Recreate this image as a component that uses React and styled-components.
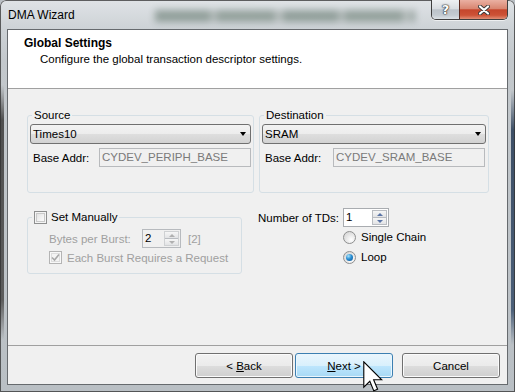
import React from "react";
import styled, { createGlobalStyle, css } from "styled-components";

const GlobalStyle = createGlobalStyle`
  html, body { margin: 0; padding: 0; background: #b9bfc4; }
  body { font-family: "Liberation Sans", Arial, sans-serif; font-size: 11.5px; color: #000; }
  * { box-sizing: border-box; }
`;

const Window = styled.div`
  position: relative;
  width: 515px;
  height: 392px;
  overflow: hidden;
  display: flex;
  flex-direction: column;
  border-radius: 6px 6px 0 0;
  box-shadow: inset 0 0 0 1px rgba(50, 50, 50, 0.75);
  background:
    linear-gradient(to bottom, transparent 85px, #4f4f4f 120px, #5c5c5c 300px, transparent 340px) left top / 4px 100% no-repeat,
    linear-gradient(to bottom, transparent 90px, #3d4f66 130px, #4b5f78 310px, transparent 345px) right top / 4px 100% no-repeat,
    linear-gradient(to bottom, #dfe3e6 0px, #cdd2d6 29px, #c3c8cc 60px, #b9bfc4 100%);
`;

const TitleBar = styled.div`
  height: 29px;
  display: flex;
  align-items: flex-start;
  padding-left: 8px;
  flex-shrink: 0;
`;

const TitleText = styled.div`
  line-height: 30px;
  font-size: 12px;
  color: #000;
`;

const BlurStrip = styled.div`
  align-self: center;
  margin-left: 80px;
  width: 260px;
  height: 12px;
  margin-top: 2px;
  background: repeating-linear-gradient(
    to right,
    #2f4a3a 0 55px,
    #7d8a83 55px 62px,
    #36503f 62px 120px,
    #8c9690 120px 128px
  );
  filter: blur(3.5px);
  opacity: 0.4;
`;

const CaptionGroup = styled.div`
  margin-left: auto;
  margin-right: 7px;
  height: 20px;
  display: flex;
  border: 1px solid #3f3f3f;
  border-top: none;
  border-radius: 0 0 5px 5px;
  overflow: hidden;
  box-shadow: 0 1px 0 rgba(255, 255, 255, 0.6);
`;

const CaptionButton = styled.div`
  display: flex;
  align-items: center;
  justify-content: center;
  font-family: "DejaVu Sans", "Liberation Sans", sans-serif;
  font-weight: bold;
  color: #ffffff;
  text-shadow: 0 0 1px #222, 0 0 1px #222, 0 0 2px #333;
  ${(p) =>
    p.$close
      ? css`
          width: 48px;
          font-size: 13px;
          border-left: 1px solid #5a2a20;
          background: linear-gradient(to bottom, #eab0a2 0%, #d98671 45%, #c5462c 52%, #cd5236 80%, #e18f76 100%);
        `
      : css`
          width: 27px;
          font-size: 13px;
          background: linear-gradient(to bottom, #eef0f2 0%, #d9dde1 45%, #bcc3ca 52%, #c4cbd1 80%, #dde2e6 100%);
        `}
`;

const Client = styled.div`
  flex: 1;
  margin: 0 7px 7px 7px;
  border: 1px solid #666a6e;
  background: #f0f0f0;
  display: flex;
  flex-direction: column;
`;

const Header = styled.div`
  height: 59px;
  flex-shrink: 0;
  background: #ffffff;
  border-bottom: 1px solid #a0a0a0;
  padding: 6px 0 0 16px;
`;

const HeaderTitle = styled.div`
  font-weight: bold;
  font-size: 12px;
  line-height: 15px;
`;

const HeaderSub = styled.div`
  margin-top: 1px;
  padding-left: 16px;
  line-height: 15px;
`;

const Body = styled.div`
  flex: 1;
  padding: 26px 0 0 19px;
  display: grid;
  grid-template-columns: 227px 230px;
  grid-template-rows: 78px auto;
  column-gap: 5px;
  row-gap: 15px;
  align-content: start;
`;

const Group = styled.div`
  position: relative;
  border: 1px solid #d5dfe5;
  border-radius: 3px;
  padding: 8px 2px 0 2px;
  height: 78px;
`;

const Legend = styled.div`
  position: absolute;
  top: -8px;
  left: 4px;
  padding: 0 2px;
  line-height: 15px;
  background: #f0f0f0;
  display: flex;
  align-items: center;
  gap: 4px;
`;

const Combo = styled.div`
  height: 20px;
  border: 1px solid #707070;
  border-radius: 3px;
  background: linear-gradient(to bottom, #f3f3f3 0%, #ececec 50%, #dedede 51%, #d2d2d2 100%);
  display: flex;
  align-items: center;
  padding-left: 2px;
  line-height: 18px;
`;

const ComboArrow = styled.span`
  margin-left: auto;
  margin-right: 4px;
  width: 0;
  height: 0;
  border-top: 4px solid #000;
  border-left: 3.5px solid transparent;
  border-right: 3.5px solid transparent;
`;

const AddrRow = styled.div`
  display: flex;
  align-items: center;
  margin-top: 4px;
  padding-left: 3px;
`;

const TextBox = styled.div`
  margin-left: auto;
  width: 152px;
  height: 19px;
  border: 1px solid #b8babd;
  background: #f0f0f0;
  color: #7a7a7a;
  padding-left: 2px;
  line-height: 17px;
  margin-right: ${(p) => p.$inset || 0}px;
`;

const ManualGroup = styled.div`
  position: relative;
  margin-top: 9px;
  width: 215px;
  height: 57px;
  border: 1px solid #d5dfe5;
  border-radius: 3px;
  padding: 11px 0 0 21px;
`;

const Row = styled.div`
  display: flex;
  align-items: center;
  height: ${(p) => p.$h || 19}px;
  margin-top: ${(p) => p.$mt || 0}px;
  gap: ${(p) => p.$gap || 0}px;
  color: ${(p) => (p.$disabled ? "#a0a0a0" : "#000")};
`;

const FixedLabel = styled.span`
  width: ${(p) => p.$w}px;
  flex-shrink: 0;
`;

const Bracket = styled.span`
  margin-left: 7px;
`;

const CheckBox = styled.span`
  width: 13px;
  height: 13px;
  flex-shrink: 0;
  display: inline-flex;
  align-items: center;
  justify-content: center;
  border: 1px solid ${(p) => (p.$disabled ? "#b4b4b4" : "#8e8f8f")};
  background: ${(p) =>
    p.$disabled
      ? "#f4f4f4"
      : "linear-gradient(135deg, #dcdcdc 0%, #f4f4f4 60%, #ffffff 100%)"};
  box-shadow: inset 0 0 0 1px ${(p) => (p.$disabled ? "#f8f8f8" : "#f4f4f4")},
    inset 0 0 0 2px ${(p) => (p.$disabled ? "#dedede" : "#c9c9c9")};
`;

const Spinner = styled.div`
  width: ${(p) => p.$w}px;
  height: 19px;
  border: 1px solid ${(p) => (p.$disabled ? "#b7babe" : "#a9acb0")};
  background: ${(p) => (p.$disabled ? "#f0f0f0" : "#ffffff")};
  display: flex;
  align-items: stretch;
  padding-left: 2px;
`;

const SpinValue = styled.span`
  flex: 1;
  line-height: 17px;
  color: #000;
`;

const SpinButtons = styled.div`
  width: 15px;
  display: flex;
  flex-direction: column;
  margin: 1px 1px 1px 0;
  border: 1px solid ${(p) => (p.$disabled ? "#cfd1d3" : "#b9bcc1")};
`;

const SpinButton = styled.span`
  flex: 1;
  display: flex;
  align-items: center;
  justify-content: center;
  background: linear-gradient(to bottom, #f6f6f6, #e2e3e5);
  & + & {
    border-top: 1px solid ${(p) => (p.$disabled ? "#d6d6d6" : "#b9bcc1")};
  }
`;

const SpinArrow = styled.span`
  width: 0;
  height: 0;
  border-left: 3px solid transparent;
  border-right: 3px solid transparent;
  ${(p) =>
    p.$down
      ? css`border-top: 3px solid ${p.$disabled ? "#b0b0b0" : "#5a74a6"};`
      : css`border-bottom: 3px solid ${p.$disabled ? "#b0b0b0" : "#5a74a6"};`}
`;

const TdsGrid = styled.div`
  margin-left: -1px;
  display: grid;
  grid-template-columns: 85px auto;
  grid-template-rows: 19px 20px 20px;
  align-items: center;
`;

const RadioRow = styled.div`
  grid-column: 2;
  display: flex;
  align-items: center;
  gap: 5px;
`;

const Radio = styled.span`
  width: 13px;
  height: 13px;
  border-radius: 50%;
  border: 1px solid #8e8f8f;
  background: radial-gradient(circle at 65% 70%, #ffffff 0%, #e8e8e8 45%, #cfcfcf 100%);
  display: inline-flex;
  align-items: center;
  justify-content: center;
  &::after {
    content: "";
    display: ${(p) => (p.$checked ? "block" : "none")};
    width: 7px;
    height: 7px;
    border-radius: 50%;
    background: radial-gradient(circle at 35% 30%, #a9e4fb 0%, #2a8fd3 45%, #0b4f8f 100%);
  }
`;

const Footer = styled.div`
  height: 39px;
  flex-shrink: 0;
  border-top: 1px solid #a0a0a0;
  padding: 7px 7px 0 0;
  display: flex;
  justify-content: flex-end;
  align-items: flex-start;
`;

const Button = styled.button`
  width: 98px;
  height: 25px;
  margin-left: ${(p) => p.$ml || 0}px;
  border-radius: 3px;
  font-family: "Liberation Sans", Arial, sans-serif;
  font-size: 11.5px;
  color: #000;
  padding: 0;
  ${(p) =>
    p.$hover
      ? css`
          border: 1px solid #3c7fb1;
          background: linear-gradient(to bottom, #eaf6fd 0%, #d9f0fc 50%, #bee6fd 51%, #a7d9f5 100%);
          box-shadow: inset 0 0 0 1px #eaf6fd;
        `
      : css`
          border: 1px solid #707070;
          background: linear-gradient(to bottom, #f2f2f2 0%, #ebebeb 50%, #dddddd 51%, #cfcfcf 100%);
          box-shadow: inset 0 0 0 1px #fbfbfb;
        `}
`;

const Cursor = styled.svg`
  position: absolute;
  left: 363px;
  top: 361px;
`;

const U = styled.span`
  text-decoration: underline;
`;

function Spin({ value, width, disabled }) {
  return (
    <Spinner $w={width} $disabled={disabled}>
      <SpinValue>{value}</SpinValue>
      <SpinButtons $disabled={disabled}>
        <SpinButton $disabled={disabled}>
          <SpinArrow $disabled={disabled} />
        </SpinButton>
        <SpinButton $disabled={disabled}>
          <SpinArrow $down $disabled={disabled} />
        </SpinButton>
      </SpinButtons>
    </Spinner>
  );
}

function EndpointGroup({ title, value, addr, inset }) {
  return (
    <Group>
      <Legend>{title}</Legend>
      <Combo>
        {value}
        <ComboArrow />
      </Combo>
      <AddrRow>
        Base Addr:
        <TextBox $inset={inset}>{addr}</TextBox>
      </AddrRow>
    </Group>
  );
}

function CloseGlyph() {
  return (
    <svg width="12" height="10" viewBox="0 0 12 10">
      <path d="M2 1.5 L10 8.5 M10 1.5 L2 8.5" stroke="#3a3a3a" strokeWidth="4" strokeLinecap="round" />
      <path d="M2 1.5 L10 8.5 M10 1.5 L2 8.5" stroke="#ffffff" strokeWidth="2.2" strokeLinecap="round" />
    </svg>
  );
}

export default function App() {
  return (
    <>
      <GlobalStyle />
      <Window>
        <TitleBar>
          <TitleText>DMA Wizard</TitleText>
          <BlurStrip />
          <CaptionGroup>
            <CaptionButton>?</CaptionButton>
            <CaptionButton $close>
              <CloseGlyph />
            </CaptionButton>
          </CaptionGroup>
        </TitleBar>
        <Client>
          <Header>
            <HeaderTitle>Global Settings</HeaderTitle>
            <HeaderSub>Configure the global transaction descriptor settings.</HeaderSub>
          </Header>
          <Body>
            <EndpointGroup title="Source" value="Times10" addr="CYDEV_PERIPH_BASE" />
            <EndpointGroup title="Destination" value="SRAM" addr="CYDEV_SRAM_BASE" inset={1} />
            <ManualGroup>
              <Legend>
                <CheckBox />
                Set Manually
              </Legend>
              <Row $disabled>
                <FixedLabel $w={93}>Bytes per Burst:</FixedLabel>
                <Spin value="2" width={39} disabled />
                <Bracket>[2]</Bracket>
              </Row>
              <Row $disabled $h={13} $mt={3} $gap={5}>
                <CheckBox $disabled>
                  <svg width="9" height="9" viewBox="0 0 9 9">
                    <path d="M1 4.5 L3.5 7 L8 1.5" fill="none" stroke="#a8a8a8" strokeWidth="1.6" />
                  </svg>
                </CheckBox>
                Each Burst Requires a Request
              </Row>
            </ManualGroup>
            <TdsGrid>
              <span>Number of TDs:</span>
              <Spin value="1" width={46} />
              <RadioRow>
                <Radio />
                Single Chain
              </RadioRow>
              <RadioRow>
                <Radio $checked />
                Loop
              </RadioRow>
            </TdsGrid>
          </Body>
          <Footer>
            <Button>
              &lt; <U>B</U>ack
            </Button>
            <Button $hover $ml={2}>
              <U>N</U>ext &gt;
            </Button>
            <Button $ml={9}>Cancel</Button>
          </Footer>
        </Client>
        <Cursor width="20" height="31" viewBox="0 0 12.6 19.5">
          <polygon
            points="0.5,0.5 0.5,16.5 4.3,12.8 6.8,18.8 9.2,17.8 6.7,11.8 11.8,11.8"
            fill="#ffffff"
            stroke="#000000"
            strokeWidth="0.7"
            strokeLinejoin="miter"
          />
        </Cursor>
      </Window>
    </>
  );
}
